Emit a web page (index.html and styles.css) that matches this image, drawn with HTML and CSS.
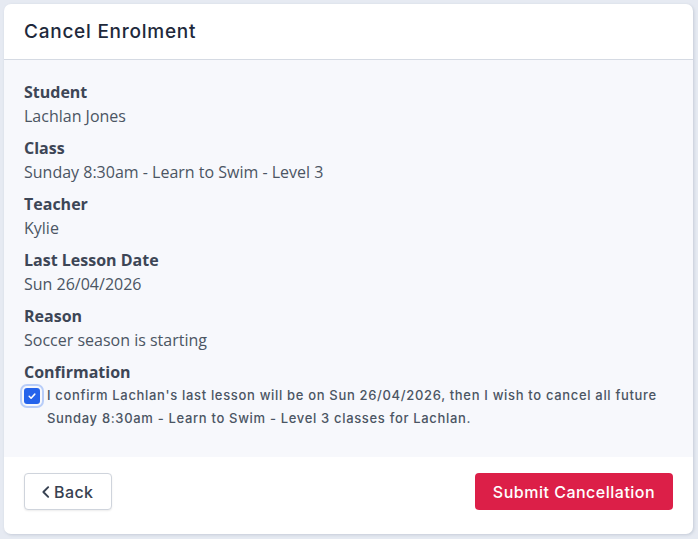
FILE: index.html
```html
<!DOCTYPE html>
<html lang="en">
<head>
<meta charset="utf-8">
<title>Cancel Enrolment</title>
<link rel="stylesheet" href="styles.css">
</head>
<body>
<div class="card">
  <div class="card-header">
    <h1 class="title">Cancel Enrolment</h1>
  </div>
  <div class="card-body">
    <div class="field">
      <div class="label">Student</div>
      <div class="value">Lachlan Jones</div>
    </div>
    <div class="field">
      <div class="label">Class</div>
      <div class="value">Sunday 8:30am - Learn to Swim - Level 3</div>
    </div>
    <div class="field">
      <div class="label">Teacher</div>
      <div class="value">Kylie</div>
    </div>
    <div class="field">
      <div class="label">Last Lesson Date</div>
      <div class="value">Sun 26/04/2026</div>
    </div>
    <div class="field">
      <div class="label">Reason</div>
      <div class="value">Soccer season is starting</div>
    </div>
    <div class="field">
      <div class="label">Confirmation</div>
      <label class="confirm">
        <span class="checkbox">
          <svg viewBox="0 0 16 16" width="10" height="10"><path d="M3.5 8.5l3 3 6-6.5" fill="none" stroke="#fff" stroke-width="2.4" stroke-linecap="round" stroke-linejoin="round"/></svg>
        </span>
        <span class="confirm-text">I confirm Lachlan's last lesson will be on Sun 26/04/2026, then I wish to cancel all future Sunday 8:30am - Learn to Swim - Level 3 classes for Lachlan.</span>
      </label>
    </div>
  </div>
  <div class="card-footer">
    <button class="btn btn-back">
      <svg viewBox="0 0 16 16" width="14" height="14"><path d="M10.5 2.5L5 8l5.5 5.5" fill="none" stroke="#374151" stroke-width="2.2" stroke-linecap="round" stroke-linejoin="round"/></svg>
      <span>Back</span>
    </button>
    <button class="btn btn-submit">Submit Cancellation</button>
  </div>
</div>
</body>
</html>
```
FILE: styles.css
```css
html, body {
  margin: 0;
  padding: 0;
  background: #e6eaf2;
}
body {
  padding: 4px 5px 5px 4px;
  font-family: "Open Sans", sans-serif;
}
.card {
  background: #ffffff;
  border-radius: 7px;
  box-shadow: 1px 1px 3px rgba(100, 116, 139, 0.25);
  overflow: hidden;
}
.card-header {
  height: 55px;
  display: flex;
  align-items: center;
  padding: 0 20px;
  border-bottom: 1px solid #d5dae3;
}
.title {
  margin: 0 0 1px;
  font-family: "Inter", sans-serif;
  font-weight: 500;
  font-size: 19px;
  letter-spacing: 0.75px;
  color: #1e293b;
}
.card-body {
  background: #f7f8fc;
  padding: 20px 20px 27px;
  display: flex;
  flex-direction: column;
  gap: 8px;
}
.label {
  font-weight: 700;
  font-size: 16px;
  line-height: 24px;
  color: #3d4656;
}
.value {
  font-size: 16px;
  line-height: 24px;
  color: #4b5563;
}
.confirm {
  display: flex;
  align-items: flex-start;
  gap: 7px;
  margin-top: 1px;
}
.checkbox {
  flex: none;
  width: 16px;
  height: 16px;
  margin-top: 3px;
  border-radius: 3px;
  background: #2563eb;
  box-shadow: 0 0 0 2px #f7f8fc, 0 0 0 4px #b8cdf9;
  display: flex;
  align-items: center;
  justify-content: center;
}
.confirm-text {
  font-family: "Inter", sans-serif;
  font-weight: 500;
  font-size: 13px;
  line-height: 23px;
  letter-spacing: 0.67px;
  color: #4b5563;
  margin-top: -1px;
}
.card-footer {
  padding: 16px 20px 24px;
  display: flex;
  justify-content: space-between;
  align-items: center;
}
.btn {
  font-family: "Inter", sans-serif;
  font-weight: 500;
  font-size: 16px;
  letter-spacing: 0.4px;
  height: 37px;
  border-radius: 4px;
  display: inline-flex;
  align-items: center;
  cursor: pointer;
}
.btn-back {
  background: #ffffff;
  border: 1px solid #cfd4dc;
  box-shadow: 0 1px 2px rgba(0, 0, 0, 0.08);
  color: #374151;
  padding: 0 14px 0 14px;
  gap: 1px;
  width: 88px;
}
.btn-submit {
  background: #dc1f48;
  border: none;
  color: #ffffff;
  padding: 0 17px;
  width: 198px;
  letter-spacing: 0.5px;
  justify-content: center;
}
```
